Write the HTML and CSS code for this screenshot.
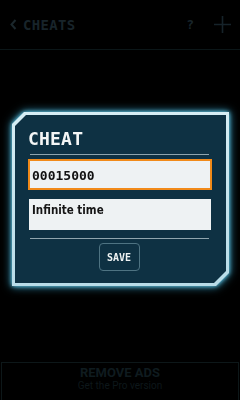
FILE: index.html
```html
<!DOCTYPE html>
<html>
	<head>
		<meta charset="utf-8" />
		<title>Cheats</title>
		<link rel="stylesheet" href="styles.css">
	</head>
	<body>
		<div class="page">
			<header class="topbar">
				<div class="back">
					<svg class="chev" width="7" height="11" viewBox="0 0 7 11"><path d="M5.5 1 L1.5 5.5 L5.5 10" fill="none" stroke="#1b272c" stroke-width="2"/></svg>
					<span class="title">CHEATS</span>
				</div>
				<div class="actions">
					<span class="help">?</span>
					<svg class="plus" width="17" height="17" viewBox="0 0 17 17"><path d="M8.5 0 V17 M0 8.5 H17" stroke="#16232a" stroke-width="1.6"/></svg>
				</div>
			</header>

			<main class="main">
				<div class="glow">
					<div class="dialog">
						<div class="dialog-in">
							<h2 class="dlg-title">CHEAT</h2>
							<div class="rule"></div>
							<div class="field active">00015000</div>
							<div class="field desc">Infinite time</div>
							<div class="rule"></div>
							<div class="btn-row">
								<button class="btn">SAVE</button>
							</div>
						</div>
					</div>
				</div>
			</main>

			<footer class="ad">
				<div class="ad-title">REMOVE ADS</div>
				<div class="ad-sub">Get the Pro version</div>
			</footer>
		</div>
	</body>
</html>
```

FILE: styles.css
```css
*{
	margin: 0;
	padding: 0;
	box-sizing: border-box;
}

body{
	background: #000;
	font-family: "DejaVu Sans", sans-serif;
}

.page{
	width: 240px;
	height: 400px;
	display: flex;
	flex-direction: column;
	overflow: hidden;
}

/* top bar (dimmed under the dialog) */
.topbar{
	height: 50px;
	border-bottom: 1px solid #0b1618;
	display: flex;
	align-items: center;
	justify-content: space-between;
	padding: 0 9px 0 10px;
}

.back{
	display: flex;
	align-items: center;
	gap: 6px;
}

.title{
	font-family: "DejaVu Sans Mono", monospace;
	font-weight: bold;
	font-size: 14px;
	color: #18242a;
	letter-spacing: 0.3px;
}

.actions{
	display: flex;
	align-items: center;
	gap: 20px;
}

.help{
	font-family: "DejaVu Sans Mono", monospace;
	font-weight: bold;
	font-size: 13px;
	color: #18242a;
}

/* dialog */
.main{
	flex: 1;
	padding: 62px 0 0 12px;
}

.glow{
	width: 217px;
	filter: drop-shadow(0 0 2px #6fd0ee) drop-shadow(0 0 4px #2e8fb0);
}

.dialog{
	height: 174px;
	padding: 3px;
	background: linear-gradient(#d6eef5, #b8dce8);
	clip-path: polygon(12px 0, 100% 0, 100% calc(100% - 13px), calc(100% - 13px) 100%, 0 100%, 0 12px);
}

.dialog-in{
	height: 100%;
	background: #0e3143;
	clip-path: polygon(11px 0, 100% 0, 100% calc(100% - 12px), calc(100% - 12px) 100%, 0 100%, 0 11px);
	padding: 15px 14px 0 13px;
}

.dlg-title{
	font-family: "DejaVu Sans Mono", monospace;
	font-weight: bold;
	font-size: 18px;
	line-height: 18px;
	color: #f4f6f6;
	letter-spacing: 0.2px;
}

.rule{
	height: 1px;
	background: #8fa5ae;
	margin: 6px 3px 0 2px;
}

.field{
	height: 31px;
	margin-top: 4px;
	background: #eef2f3;
	color: #111;
	display: flex;
	align-items: center;
	padding-left: 4px;
}

.field.active{
	border: 2px solid #f18a19;
	padding-left: 2px;
	font-family: "DejaVu Sans Mono", monospace;
	font-weight: bold;
	font-size: 13px;
	padding-top: 2px;
}

.field.desc{
	margin: 9px 1px 0 1px;
	align-items: flex-start;
	padding-top: 4px;
	padding-left: 3px;
	font-family: "DejaVu Sans Condensed", sans-serif;
	font-weight: bold;
	font-size: 11.5px;
	color: #151515;
}

.field.desc + .rule{
	margin-top: 8px;
}

.btn-row{
	display: flex;
	justify-content: center;
	padding-top: 4px;
	padding-right: 2px;
}

.btn{
	width: 41px;
	height: 28px;
	border: 1px solid #4e7382;
	border-radius: 4px;
	background: #0e3143;
	color: #eef2f2;
	font-family: "DejaVu Sans Mono", monospace;
	font-weight: bold;
	font-size: 10px;
}

/* ad banner */
.ad{
	height: 38px;
	margin: 0 1px;
	border: 1px solid #0d1719;
	border-bottom: none;
	text-align: center;
	padding-top: 3px;
}

.ad-title{
	font-family: "Roboto", sans-serif;
	font-weight: bold;
	font-size: 13px;
	line-height: 14px;
	color: #0f1b1f;
}

.ad-sub{
	font-family: "Roboto", sans-serif;
	font-size: 10px;
	line-height: 12px;
	color: #0d171a;
}
```
